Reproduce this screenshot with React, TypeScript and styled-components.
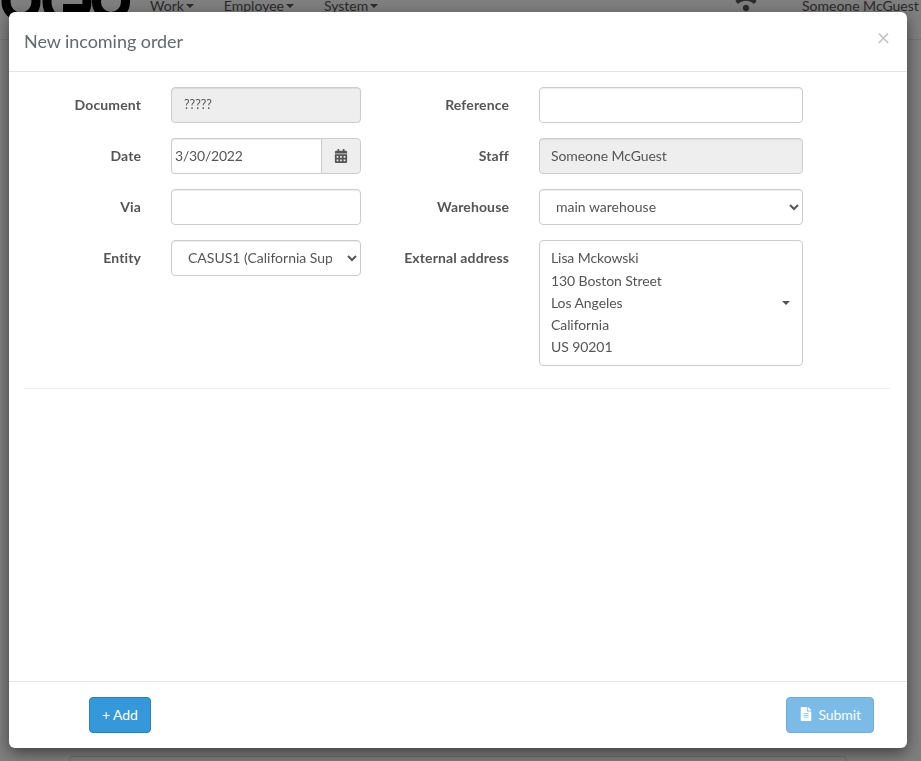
import { createGlobalStyle, styled } from 'styled-components'
import { FaCalendarAlt, FaFileAlt, FaWifi } from 'react-icons/fa'

const GlobalStyle = createGlobalStyle`
  html, body {
    margin: 0;
    height: 100%;
    background: #fff;
    font-family: Lato, "Liberation Sans", sans-serif;
    font-size: 14px;
    color: #555;
    overflow: hidden;
  }
  * { box-sizing: border-box; }
`

const Navbar = styled.nav`
  margin-top: -20px;
  height: 60px;
  padding-bottom: 8px;
  border-bottom: 1px solid #e7e7e7;
  display: flex;
  align-items: center;
`

const Logo = styled.svg`
  width: 132px;
  height: 52px;
  flex: none;
`

const NavMenu = styled.div`
  display: flex;
  gap: 30px;
  margin-left: 18px;
  flex: 1;
`

const NavItem = styled.span`
  display: inline-flex;
  align-items: center;
  gap: 2px;
`

const Caret = styled.span`
  display: inline-block;
  flex: none;
  width: 0;
  height: 0;
  border-top: 4px solid currentColor;
  border-left: 4px solid transparent;
  border-right: 4px solid transparent;
`

const NavRight = styled.div`
  flex: none;
  width: 191px;
  display: flex;
  align-items: center;
  gap: 40px;
  overflow: hidden;
`

const WifiIcon = styled(FaWifi)`
  flex: none;
  font-size: 32px;
  margin-top: -12px;
`

const UserName = styled.span`
  flex: none;
  display: inline-flex;
  align-items: center;
  gap: 2px;
`

const BehindPanel = styled.div`
  margin: 716px 0 0 69px;
  width: 778px;
  height: 60px;
  border: 1px solid #ddd;
  border-radius: 4px;
`

const Backdrop = styled.div`
  position: fixed;
  inset: 0;
  background: rgba(0, 0, 0, 0.5);
  padding: 12px 14px 13px 9px;
`

const Modal = styled.div`
  height: 100%;
  background: #fff;
  border-radius: 6px;
  box-shadow: 0 5px 15px rgba(0, 0, 0, 0.5);
  display: flex;
  flex-direction: column;
  overflow: hidden;
`

const ModalHeader = styled.header`
  height: 60px;
  flex: none;
  border-bottom: 1px solid #e5e5e5;
  display: flex;
  justify-content: space-between;
  padding: 15px 17px 0 15px;
`

const ModalTitle = styled.h4`
  margin: 0;
  font-size: 18px;
  font-weight: 400;
  line-height: 29px;
  letter-spacing: -0.05px;
  color: #626a6e;
`

const CloseButton = styled.button`
  border: 0;
  background: none;
  padding: 0;
  height: 20px;
  color: #c6c6c6;
  font: 400 23px/20px Lato, "Liberation Sans", sans-serif;
`

const ModalBody = styled.div`
  flex: 1;
  overflow-y: scroll;
  padding: 15px 17px 0 15px;

  &::-webkit-scrollbar {
    width: 14px;
  }
  &::-webkit-scrollbar-track {
    background: #f0f0f0;
  }
  &::-webkit-scrollbar-button:single-button {
    height: 15px;
    background-color: #f0f0f0;
    background-repeat: no-repeat;
    background-size: 8px 4px;
  }
  &::-webkit-scrollbar-button:single-button:vertical:decrement {
    background-image: conic-gradient(from 135deg at 50% 0, #a3a3a3 0 90deg, transparent 90deg);
    background-position: 3px 6px;
  }
  &::-webkit-scrollbar-button:single-button:vertical:increment {
    background-image: conic-gradient(from -45deg at 50% 100%, #a3a3a3 0 90deg, transparent 90deg);
    background-position: 3px 5px;
  }
`

const FormGrid = styled.div`
  display: grid;
  grid-template-columns: 117px 190px 118px 264px;
  column-gap: 30px;
  row-gap: 15px;
  align-items: start;
`

const Label = styled.label`
  font-weight: 700;
  text-align: right;
  line-height: 36px;
  height: 36px;
  letter-spacing: 0.12px;
`

const Input = styled.input<{ $compact?: boolean }>`
  width: 100%;
  height: 36px;
  border: 1px solid #ccc;
  border-radius: 4px;
  background: ${(p) => (p.readOnly ? '#eee' : '#fff')};
  padding: 0 ${(p) => (p.$compact ? '3px' : '11px')} 2px;
  font: 14px Lato, "Liberation Sans", sans-serif;
  letter-spacing: ${(p) => (p.$compact ? '-0.2px' : '-0.08px')};
  color: #555;
  box-shadow: inset 0 1px 1px rgba(0, 0, 0, 0.075);
  outline: none;
`

const SmallInput = styled(Input)`
  font-size: 12.5px;
  padding-left: 12px;
  letter-spacing: 0;
`

const InputGroup = styled.div`
  display: flex;
  ${Input} {
    border-radius: 4px 0 0 4px;
    border-right: 0;
    flex: 1;
    min-width: 0;
  }
`

const InputAddon = styled.span`
  flex: none;
  width: 40px;
  height: 36px;
  background: #eee;
  border: 1px solid #ccc;
  border-radius: 0 4px 4px 0;
  display: flex;
  align-items: center;
  justify-content: center;
  font-size: 14px;
  color: #555;
`

const Select = styled.select`
  width: 100%;
  height: 36px;
  border: 1px solid #ccc;
  border-radius: 4px;
  background: #fff;
  padding: 0 12px 2px;
  font: 14px Lato, "Liberation Sans", sans-serif;
  color: #555;
  box-shadow: inset 0 1px 1px rgba(0, 0, 0, 0.075);
`

const AddressBox = styled.div`
  height: 126px;
  border: 1px solid #ccc;
  border-radius: 4px;
  padding: 6px 12px 6px 11px;
  line-height: 22.3px;
  letter-spacing: -0.08px;
  display: flex;
  justify-content: space-between;
  align-items: center;
`

const Divider = styled.hr`
  border: 0;
  border-top: 1px solid #eee;
  margin: 22px 0 0;
`

const ModalFooter = styled.footer`
  height: 67px;
  flex: none;
  border-top: 1px solid #e5e5e5;
  display: flex;
  justify-content: space-between;
  align-items: flex-start;
  padding: 15px 33px 0 80px;
`

const Button = styled.button<{ $disabled?: boolean }>`
  height: 36px;
  padding: 0 12px 2px;
  border: 1px solid #2980b9;
  border-radius: 4px;
  background: #3498db;
  color: #fff;
  font: 14px Lato, "Liberation Sans", sans-serif;
  letter-spacing: -0.08px;
  display: inline-flex;
  align-items: center;
  gap: 5px;
  opacity: ${(p) => (p.$disabled ? 0.65 : 1)};
`

const navItems = ['Work', 'Employee', 'System']

export default function App() {
  return (
    <>
      <GlobalStyle />
      <Navbar>
        <Logo viewBox="0 -20 132 52">
          <circle cx="21" cy="2" r="15" fill="none" stroke="#000" strokeWidth="9" />
          <circle cx="67" cy="2" r="20" fill="none" stroke="#000" strokeWidth="9" />
          <rect x="63" y="4" width="20" height="8" fill="#000" />
          <circle cx="111" cy="2" r="14.5" fill="none" stroke="#000" strokeWidth="9" />
        </Logo>
        <NavMenu>
          {navItems.map((item) => (
            <NavItem key={item}>
              {item}
              <Caret />
            </NavItem>
          ))}
        </NavMenu>
        <NavRight>
          <WifiIcon />
          <UserName>
            Someone McGuest
            <Caret />
          </UserName>
        </NavRight>
      </Navbar>
      <BehindPanel />
      <Backdrop>
        <Modal>
          <ModalHeader>
            <ModalTitle>New incoming order</ModalTitle>
            <CloseButton aria-label="Close">×</CloseButton>
          </ModalHeader>
          <ModalBody>
            <FormGrid>
              <Label>Document</Label>
              <SmallInput readOnly value="?????" />
              <Label>Reference</Label>
              <Input />

              <Label>Date</Label>
              <InputGroup>
                <Input $compact defaultValue="3/30/2022" />
                <InputAddon>
                  <FaCalendarAlt />
                </InputAddon>
              </InputGroup>
              <Label>Staff</Label>
              <Input readOnly value="Someone McGuest" />

              <Label>Via</Label>
              <Input />
              <Label>Warehouse</Label>
              <Select defaultValue="main">
                <option value="main">main warehouse</option>
              </Select>

              <Label>Entity</Label>
              <Select defaultValue="casus1">
                <option value="casus1">CASUS1 (California Supplies)</option>
              </Select>
              <Label>External address</Label>
              <AddressBox>
                <div>
                  Lisa Mckowski
                  <br />
                  130 Boston Street
                  <br />
                  Los Angeles
                  <br />
                  California
                  <br />
                  US 90201
                </div>
                <Caret />
              </AddressBox>
            </FormGrid>
            <Divider />
          </ModalBody>
          <ModalFooter>
            <Button>+ Add</Button>
            <Button $disabled>
              <FaFileAlt />
              Submit
            </Button>
          </ModalFooter>
        </Modal>
      </Backdrop>
    </>
  )
}
